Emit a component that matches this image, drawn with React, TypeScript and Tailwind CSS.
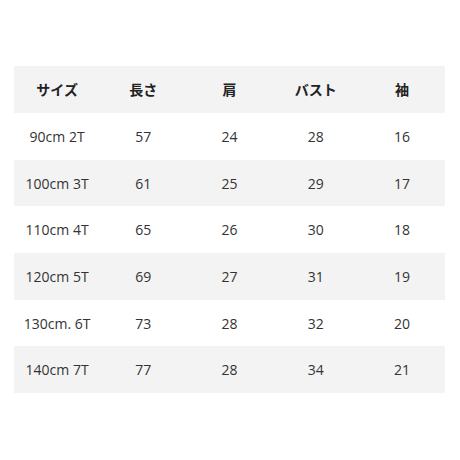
import React from "react";

const HEAD = ["サイズ", "長さ", "肩", "バスト", "袖"];

const ROWS = [
  ["90cm 2T", "57", "24", "28", "16"],
  ["100cm 3T", "61", "25", "29", "17"],
  ["110cm 4T", "65", "26", "30", "18"],
  ["120cm 5T", "69", "27", "31", "19"],
  ["130cm. 6T", "73", "28", "32", "20"],
  ["140cm 7T", "77", "28", "34", "21"],
];

export default function App() {
  return (
    <div className="w-[460px] h-[460px] bg-white pt-[66px] pl-[14px] font-['Open_Sans','Noto_Sans_CJK_JP',sans-serif] text-[14px] text-[#333]">
      <div className="w-[431px]">
        <div className="grid grid-cols-5 h-[47px] items-center bg-[#f3f3f3] font-bold text-[#222]">
          {HEAD.map((h) => (
            <div key={h} className="text-center font-['Noto_Sans_CJK_JP',sans-serif]">
              {h}
            </div>
          ))}
        </div>
        {ROWS.map((r, i) => (
          <div
            key={i}
            className={`grid grid-cols-5 h-[46.7px] items-center ${i % 2 === 1 ? "bg-[#f3f3f3]" : "bg-white"}`}
          >
            {r.map((c, j) => (
              <div key={j} className="text-center">
                {c}
              </div>
            ))}
          </div>
        ))}
      </div>
    </div>
  );
}
